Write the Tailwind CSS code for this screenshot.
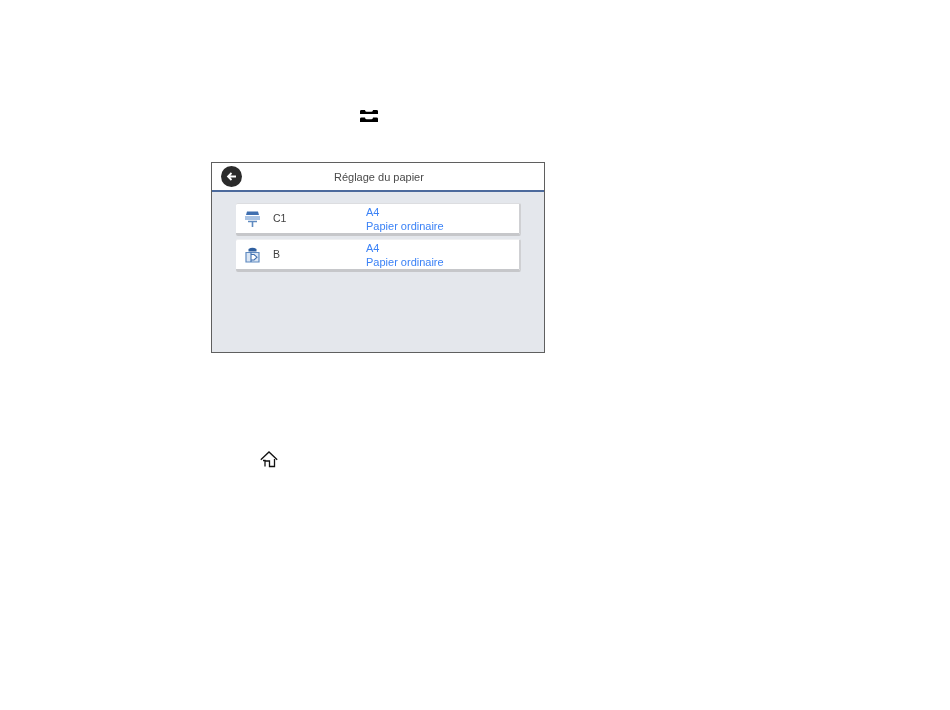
<!DOCTYPE html>
<html>

<head>
    <title>Réglage du papier</title>
    <meta charset="utf-8">
    <script src="https://cdn.jsdelivr.net/npm/@tailwindcss/browser@4"></script>
</head>

<body class="bg-white font-['Liberation_Sans',Arial,sans-serif]">
    <div class="w-[950px] h-[710px] overflow-hidden pt-[110px]">
        <!-- icone papier -->
        <svg class="ml-[360px] w-[18px] h-[12px] block blur-[0.3px]" viewBox="0 0 18 12">
            <path d="M0 4V1.2Q0 0 1.5 0H5Q5 1.8 6.5 1.8H11.5Q13 1.8 13 0H16.5Q18 0 18 1.2V4Z M0 12V8.7Q0 7.5 1.5 7.5H5Q5 9.3 6.5 9.3H11.5Q13 9.3 13 7.5H16.5Q18 7.5 18 8.7V12Z" fill="#000"></path>
        </svg>

        <div class="ml-[211px] mt-[40px] w-[334px] h-[191px] border border-[#5f5f5f] bg-[#e4e7ec] flex flex-col blur-[0.6px]">
            <div class="h-[29px] shrink-0 bg-white border-b-2 border-[#4c6a9c] flex items-center relative">
                <div class="ml-[9px] w-[21px] h-[21px] rounded-full bg-[#2b2b2b] flex items-center justify-center">
                    <svg class="w-[11px] h-[11px]" viewBox="0 0 11 11" fill="none" stroke="#fff" stroke-width="1.8">
                        <path d="M10 5.5H2 M5.5 2L2 5.5L5.5 9"></path>
                    </svg>
                </div>
                <div class="absolute left-[122px] top-[7px] text-[11px] leading-[15px] text-[#4a4a4a]">Réglage du papier</div>
            </div>

            <div class="pt-[11px] pl-[24px] flex flex-col gap-[3px]">
                <div class="w-[285px] h-[33px] bg-white rounded-[2px] border-t border-t-[#dcdde0] border-r-2 border-r-[#cfd0d3] border-b-[3px] border-b-[#c6c7ca] flex items-center">
                    <svg class="ml-[9px] w-[15px] h-[16px] shrink-0" viewBox="0 0 15 16">
                        <path d="M2 0.5H13L14 4H1Z" fill="#3f6fb0"></path>
                        <path d="M0 5H15V9H0Z" fill="#a9c3e4"></path>
                        <path d="M3 10.5H12 M7.5 10.5V16" stroke="#5f8ac0" stroke-width="1.6" fill="none"></path>
                    </svg>
                    <div class="ml-[13px] w-[93px] text-[10.5px] text-[#3f3f3f]">C1</div>
                    <div class="text-[11px] leading-[14px] text-[#3b82f6]">
                        <div>A4</div>
                        <div>Papier ordinaire</div>
                    </div>
                </div>
                <div class="w-[285px] h-[33px] bg-white rounded-[2px] border-t border-t-[#eeeff1] border-r-2 border-r-[#cfd0d3] border-b-[3px] border-b-[#c6c7ca] flex items-center">
                    <svg class="ml-[9px] w-[15px] h-[16px] shrink-0" viewBox="0 0 15 16">
                        <path d="M3.5 4.5V2Q7.5 -0.5 11.5 2V4.5Z" fill="#2f5f9f"></path>
                        <path d="M1 5.5H14V15H1Z" fill="#dbe6f4" stroke="#5f8ac0" stroke-width="1.2"></path>
                        <path d="M6 5.5V15 M6 7.5H9L12 10.2L9 13H6" fill="#fff" stroke="#3f6fb0" stroke-width="1.1"></path>
                    </svg>
                    <div class="ml-[13px] w-[93px] text-[10.5px] text-[#3f3f3f]">B</div>
                    <div class="text-[11px] leading-[14px] text-[#3b82f6]">
                        <div>A4</div>
                        <div>Papier ordinaire</div>
                    </div>
                </div>
            </div>
        </div>

        <!-- icone accueil -->
        <svg class="ml-[260px] mt-[98px] w-[18px] h-[17px] block blur-[0.3px]" viewBox="0 0 18 17" fill="none" stroke="#111" stroke-width="1.3">
            <path d="M0.8 8.8L9 1L17.2 8.8 M3 9.5H5V15.5 M5 10H9.5V15.5H14.5V8"></path>
        </svg>
    </div>
</body>

</html>
